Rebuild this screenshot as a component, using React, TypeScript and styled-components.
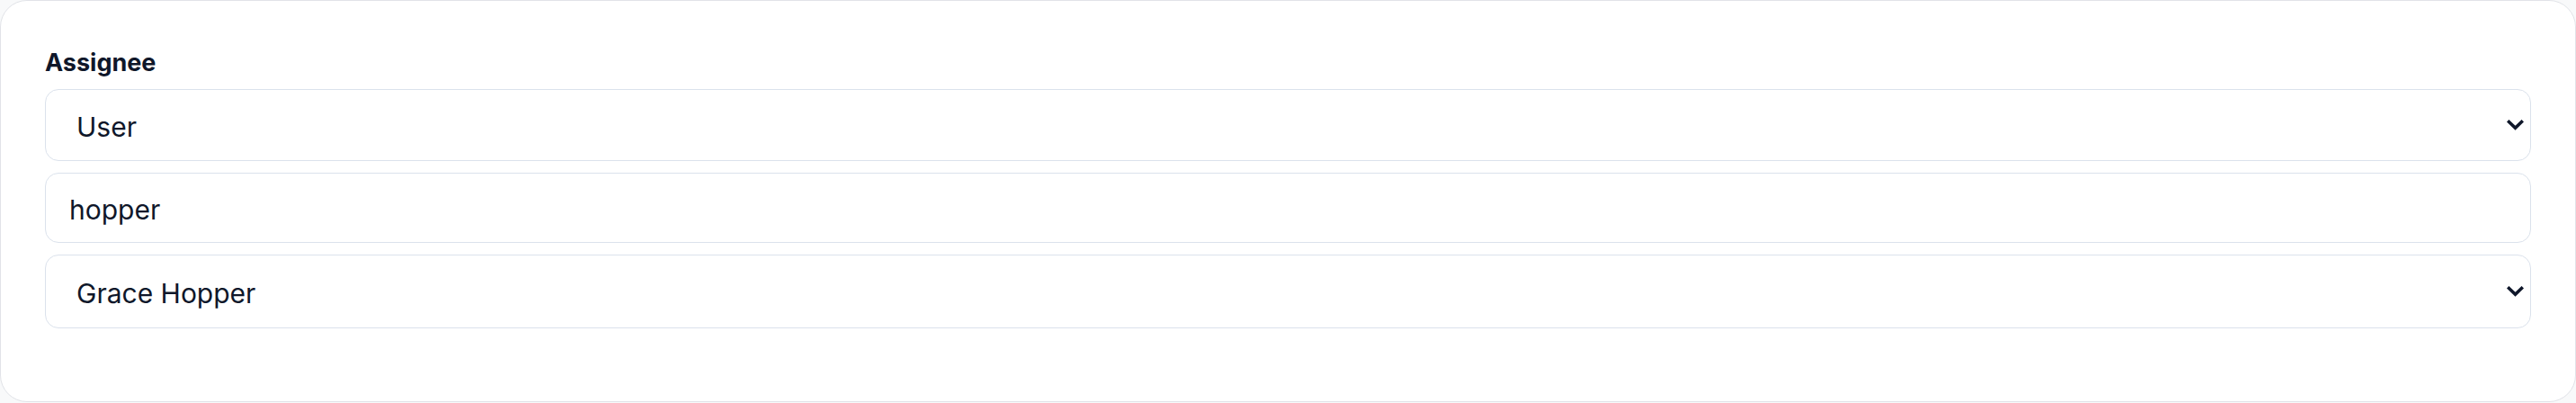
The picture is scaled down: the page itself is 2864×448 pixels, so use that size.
import React from 'react';
import styled, { createGlobalStyle } from 'styled-components';

const colors = {
    ink: '#0f172a',
    field: '#dbe2ec',
    card: '#e1e3e8',
    page: '#f8f9fa',
};

const GlobalStyle = createGlobalStyle`
    html, body {
        margin: 0;
        padding: 0;
        background: ${colors.page};
    }
    * {
        box-sizing: border-box;
    }
`;

const Chevron = () => (
    <svg width="19" height="12" viewBox="0 0 19 12" fill="none">
        <path d="M2.5 2.5 L9.5 9.2 L16.5 2.5" stroke={colors.ink} strokeWidth="3.6" strokeLinecap="square" />
    </svg>
);

const Select = ({ value, options, tall }: { value: string; options: string[]; tall?: boolean }) => (
    <SelectWrap>
        <SelectBox defaultValue={value} $tall={tall}>
            {options.map((o) => (
                <option key={o}>{o}</option>
            ))}
        </SelectBox>
        <ArrowSlot>
            <Chevron />
        </ArrowSlot>
    </SelectWrap>
);

export default function App() {
    return (
        <>
            <GlobalStyle />
            <Card>
                <Label htmlFor="assignee-type">Assignee</Label>
                <Fields>
                    <Select value="User" options={['User', 'Team', 'Group']} />
                    <SearchInput defaultValue="hopper" />
                    <Select value="Grace Hopper" options={['Grace Hopper', 'Ada Lovelace']} tall />
                </Fields>
            </Card>
        </>
    );
}

const Card = styled.section`
    width: 2864px;
    height: 447px;
    background: #fff;
    border: 1px solid ${colors.card};
    border-radius: 30px;
    padding: 49px 49px 0;
    font-family: 'Inter', 'Liberation Sans', sans-serif;
    color: ${colors.ink};
`;

const Label = styled.label`
    display: block;
    font-size: 27px;
    font-weight: 700;
    line-height: 40px;
    margin-bottom: 9px;
`;

const Fields = styled.div`
    display: flex;
    flex-direction: column;
    gap: 13px;
`;

const SelectWrap = styled.div`
    position: relative;
`;

const SelectBox = styled.select<{ $tall?: boolean }>`
    appearance: none;
    display: block;
    width: 100%;
    height: ${(p) => (p.$tall ? '82px' : '80px')};
    padding: 4px 50px 0 34px;
    border: 1px solid ${colors.field};
    border-radius: 15px;
    background: #fff;
    font-family: inherit;
    font-size: 30px;
    color: ${colors.ink};
    outline: none;
`;

const ArrowSlot = styled.span`
    position: absolute;
    right: 8px;
    top: 50%;
    transform: translateY(-50%);
    display: flex;
    pointer-events: none;
`;

const SearchInput = styled.input`
    display: block;
    width: 100%;
    height: 78px;
    padding: 3px 26px 0;
    border: 1px solid ${colors.field};
    border-radius: 15px;
    background: #fff;
    font-family: inherit;
    font-size: 30px;
    color: ${colors.ink};
    outline: none;
`;
